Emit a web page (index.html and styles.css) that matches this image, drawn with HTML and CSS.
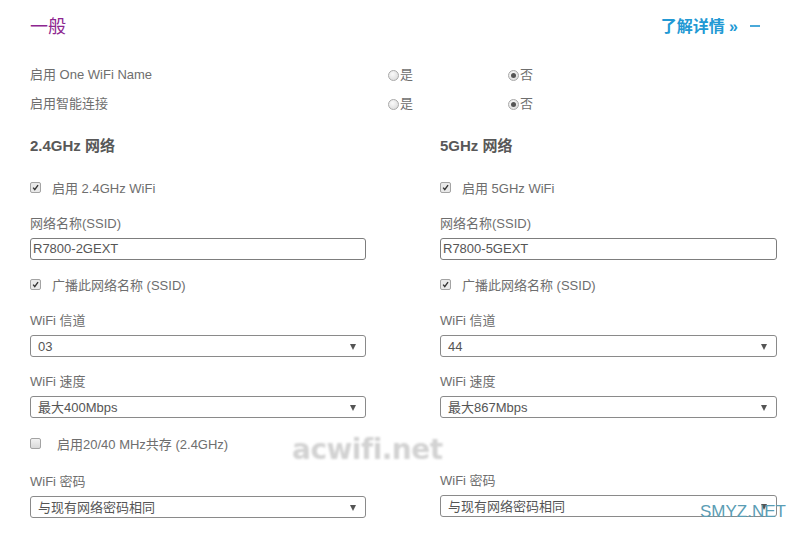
FILE: index.html
```html
<!DOCTYPE html>
<html lang="zh-CN">
<head>
    <meta charset="UTF-8">
    <title>无线设置</title>
    <link rel="stylesheet" href="styles.css">
</head>
<body>
    <div class="page-head">
        <h1 class="page-title">一般</h1>
        <div class="head-links">
            <a class="more-link" href="#">了解详情 »</a>
            <span class="collapse"></span>
        </div>
    </div>

    <div class="switch-list">
        <div class="switch-row">
            <span>启用 One WiFi Name</span>
            <label class="radio-opt"><span class="radio"></span>是</label>
            <label class="radio-opt"><span class="radio checked"></span>否</label>
        </div>
        <div class="switch-row">
            <span>启用智能连接</span>
            <label class="radio-opt"><span class="radio"></span>是</label>
            <label class="radio-opt"><span class="radio checked"></span>否</label>
        </div>
    </div>

    <div class="bands">
        <!-- 2.4GHz -->
        <div class="band">
            <div class="band-title">2.4GHz 网络</div>
            <div class="check-row">
                <span class="check checked"><svg viewBox="0 0 11 11"><path d="M2.6 5.6 L4.6 8 L8.6 2.6"/></svg></span>
                <span>启用 2.4GHz WiFi</span>
            </div>
            <div class="field first">
                <div class="field-label">网络名称(SSID)</div>
                <div class="text-box">R7800-2GEXT</div>
            </div>
            <div class="check-row after-box">
                <span class="check checked"><svg viewBox="0 0 11 11"><path d="M2.6 5.6 L4.6 8 L8.6 2.6"/></svg></span>
                <span>广播此网络名称 (SSID)</span>
            </div>
            <div class="field first">
                <div class="field-label">WiFi 信道</div>
                <div class="select-box"><span>03</span><span class="arrow"></span></div>
            </div>
            <div class="field">
                <div class="field-label">WiFi 速度</div>
                <div class="select-box"><span>最大400Mbps</span><span class="arrow"></span></div>
            </div>
            <div class="check-row after-box wide">
                <span class="check"></span>
                <span>启用20/40 MHz共存 (2.4GHz)</span>
            </div>
            <div class="field last">
                <div class="field-label">WiFi 密码</div>
                <div class="select-box"><span>与现有网络密码相同</span><span class="arrow"></span></div>
            </div>
        </div>

        <!-- 5GHz -->
        <div class="band">
            <div class="band-title">5GHz 网络</div>
            <div class="check-row">
                <span class="check checked"><svg viewBox="0 0 11 11"><path d="M2.6 5.6 L4.6 8 L8.6 2.6"/></svg></span>
                <span>启用 5GHz WiFi</span>
            </div>
            <div class="field first">
                <div class="field-label">网络名称(SSID)</div>
                <div class="text-box">R7800-5GEXT</div>
            </div>
            <div class="check-row after-box">
                <span class="check checked"><svg viewBox="0 0 11 11"><path d="M2.6 5.6 L4.6 8 L8.6 2.6"/></svg></span>
                <span>广播此网络名称 (SSID)</span>
            </div>
            <div class="field first">
                <div class="field-label">WiFi 信道</div>
                <div class="select-box"><span>44</span><span class="arrow"></span></div>
            </div>
            <div class="field">
                <div class="field-label">WiFi 速度</div>
                <div class="select-box"><span>最大867Mbps</span><span class="arrow"></span></div>
            </div>
            <div class="check-row after-box"></div>
            <div class="field last">
                <div class="field-label">WiFi 密码</div>
                <div class="select-box"><span>与现有网络密码相同</span><span class="arrow"></span></div>
            </div>
        </div>
    </div>

    <!-- 图片水印 -->
    <div class="mark-acwifi">acwifi.net</div>
    <div class="mark-smyz">SMYZ.NET</div>
</body>
</html>
```

FILE: styles.css
```css
body {
    margin: 0;
    padding: 0 21px 0 30px;
    height: 534px;
    overflow: hidden;
    position: relative;
    background-color: #fff;
    color: #6e6e6e;
    font-family: "Liberation Sans", "Noto Sans CJK SC", sans-serif;
    font-size: 13px;
}
.page-head {
    display: flex;
    justify-content: space-between;
    align-items: center;
    height: 24px;
    padding-top: 13px;
    padding-right: 17px;
}
.page-title {
    margin: 0;
    font-size: 18px;
    font-weight: normal;
    color: #8d2690;
}
.head-links {
    display: flex;
    align-items: center;
    gap: 12px;
}
.more-link {
    color: #2299d4;
    font-size: 16px;
    font-weight: bold;
    text-decoration: none;
}
.collapse {
    width: 10px;
    height: 2px;
    margin-top: 2px;
    background-color: #4aa9d9;
}

/* 单选行 */
.switch-list {
    margin-top: 29px;
    display: flex;
    flex-direction: column;
    gap: 11px;
}
.switch-row {
    display: grid;
    grid-template-columns: 358px 120px 1fr;
    line-height: 18px;
    height: 18px;
}
.radio-opt {
    display: flex;
    align-items: center;
    gap: 1px;
}
.radio {
    width: 11px;
    height: 11px;
    box-sizing: border-box;
    border: 1px solid #a9a9a9;
    border-radius: 50%;
    background: radial-gradient(circle at 40% 35%, #fafafa, #d6d6d6);
    display: flex;
    align-items: center;
    justify-content: center;
}
.radio.checked::after {
    content: "";
    width: 5px;
    height: 5px;
    border-radius: 50%;
    background-color: #555;
}

/* 两列频段 */
.bands {
    display: grid;
    grid-template-columns: 336px 337px;
    column-gap: 74px;
    margin-top: 23px;
}
.band {
    display: flex;
    flex-direction: column;
}
.band-title {
    line-height: 20px;
    font-size: 15px;
    font-weight: bold;
    color: #585858;
}
.check-row {
    display: flex;
    align-items: center;
    gap: 11px;
    height: 20px;
    margin-top: 21px;
}
.check-row.after-box {
    margin-top: 14px;
}
.check-row.wide {
    margin-top: 15px;
    gap: 16px;
}
.check {
    width: 11px;
    height: 11px;
    box-sizing: border-box;
    border: 1px solid #a3a3a3;
    border-radius: 2px;
    background: linear-gradient(#f2f2f2, #d9d9d9);
    display: flex;
}
.check.checked {
    background: #e9e9e9;
}
.check svg {
    width: 100%;
    height: 100%;
    fill: none;
    stroke: #333;
    stroke-width: 1.7;
}
.field {
    margin-top: 16px;
}
.field.first {
    margin-top: 18px;
}
.field.last {
    margin-top: 20px;
}
.field-label {
    line-height: 18px;
    margin-bottom: 5px;
}
.text-box,
.select-box {
    height: 22px;
    box-sizing: border-box;
    border: 1px solid #7d7d7d;
    border-radius: 3px;
    color: #555;
    line-height: 20px;
}
.text-box {
    padding: 0 2px;
}
.select-box {
    display: flex;
    justify-content: space-between;
    align-items: center;
    padding: 1px 9px 0 7px;
    border-color: #8a8a8a;
}
.arrow {
    width: 0;
    height: 0;
    border-left: 3px solid transparent;
    border-right: 3px solid transparent;
    border-top: 6px solid #555;
}

/* 水印 */
.mark-acwifi {
    position: absolute;
    left: 292px;
    top: 433px;
    font-family: "DejaVu Sans", sans-serif;
    font-weight: bold;
    font-size: 28px;
    letter-spacing: -0.5px;
    color: #d2d2d2;
    filter: blur(0.8px);
}
.mark-smyz {
    position: absolute;
    left: 700px;
    top: 502px;
    font-size: 17px;
    color: #5b9db4;
}
```
